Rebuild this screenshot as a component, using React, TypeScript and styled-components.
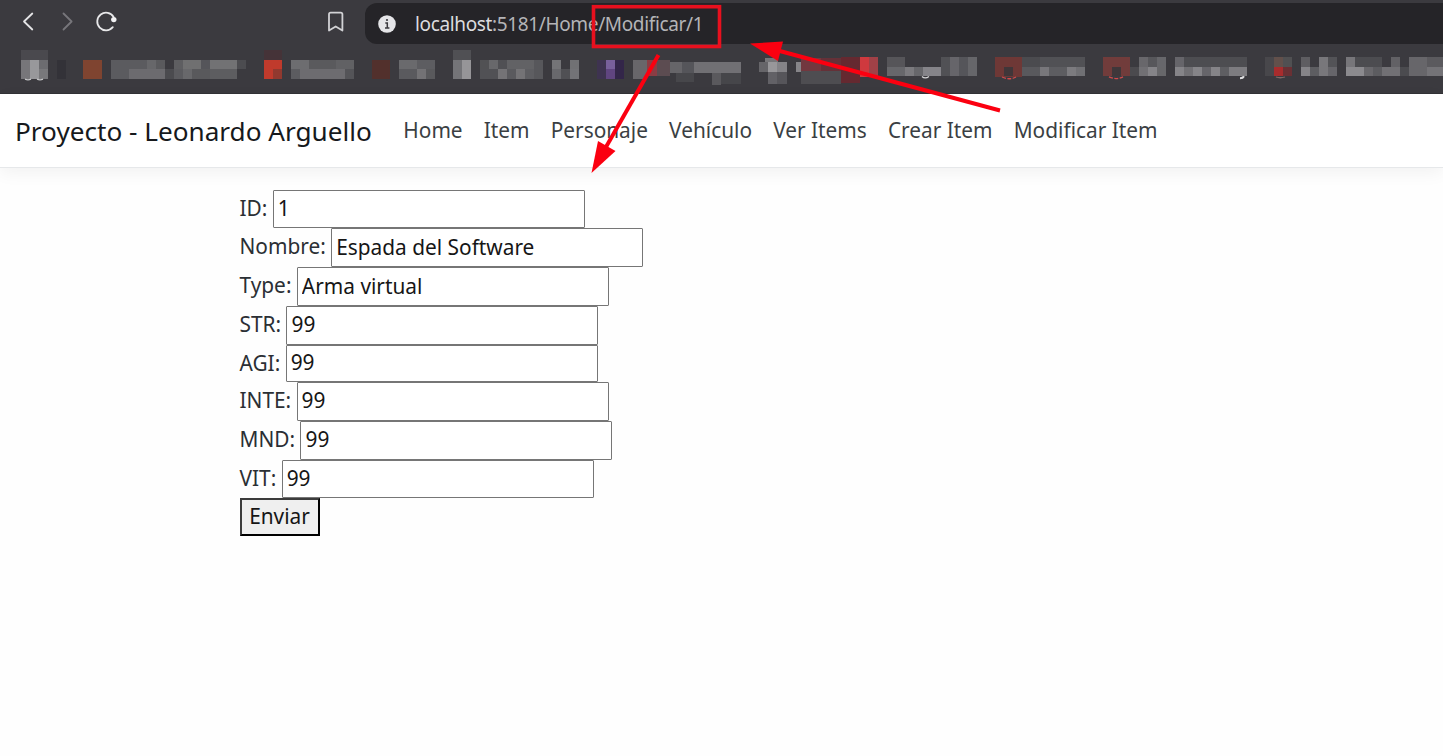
import React from "react";
import styled, { createGlobalStyle } from "styled-components";

const Global = createGlobalStyle`
  *, *::before, *::after { box-sizing: border-box; }
  body {
    margin: 0;
    background: #fefefe;
    font-family: "Noto Sans", sans-serif;
    font-size: 20.85px;
    color: #2b2f34;
    overflow: hidden;
  }
`;

const Page = styled.div`
  position: relative;
  width: 1443px;
  height: 756px;
  overflow: hidden;
  display: flex;
  flex-direction: column;
`;

const Chrome = styled.div`
  height: 94px;
  flex: none;
  background: #3b3a3f;
  display: flex;
  flex-direction: column;
  border-bottom: 1px solid #323236;
`;

const Toolbar = styled.div`
  height: 44px;
  padding: 3px 0 0 15px;
  display: flex;
  align-items: flex-start;
`;

const NavIcons = styled.svg`
  width: 350px;
  height: 41px;
  flex: none;
  display: block;
`;

const AddressBar = styled.div`
  flex: 1;
  height: 41px;
  padding-left: 12.5px;
  border-radius: 12px 0 0 12px;
  background: #252428;
  display: flex;
  align-items: center;
  gap: 19.5px;
`;

const InfoIcon = styled.svg`
  width: 18px;
  height: 18px;
  flex: none;
`;

const Url = styled.div`
  font-size: 19px;
  letter-spacing: -0.36px;
  line-height: 40px;
  color: #b4b4b7;
  white-space: nowrap;
`;

const Host = styled.span`
  color: #dcdcdf;
`;

const Bookmarks = styled.svg`
  display: block;
  width: 1443px;
  height: 49px;
`;

const Navbar = styled.nav`
  height: 74px;
  flex: none;
  padding-left: 15px;
  display: flex;
  align-items: center;
  background: #fff;
  border-bottom: 1px solid #e6e8ea;
  box-shadow: 0 5px 16px rgba(0, 0, 0, 0.05);
`;

const Brand = styled.a`
  font-size: 26.15px;
  line-height: 40px;
  color: #16191c;
  margin-right: 31.5px;
  white-space: nowrap;
`;

const Links = styled.div`
  display: flex;
  gap: 21.1px;
`;

const NavLink = styled.a`
  line-height: 32px;
  color: #3b3f43;
  white-space: nowrap;
  padding-bottom: 2px;
`;

const Form = styled.form`
  padding: 22px 0 0 239.5px;
  display: flex;
  flex-direction: column;
  align-items: flex-start;
`;

const Row = styled.label<{ $h: number }>`
  height: ${(p) => p.$h}px;
  display: flex;
  align-items: stretch;
  gap: 5.4px;
  line-height: 37px;
  white-space: nowrap;
`;

const Field = styled.input`
  width: 312px;
  margin: 0;
  padding: 0 4px 2px;
  border: 1px solid #767676;
  border-radius: 1px;
  background: #fff;
  color: #161616;
  font: inherit;
  line-height: 28px;
  outline: none;
`;

const Submit = styled.button`
  width: 80px;
  height: 38px;
  padding: 0 0 2px;
  border: 2px solid;
  border-color: #3c3c3c #000 #000 #3c3c3c;
  border-radius: 0;
  background: #efefef;
  color: #161616;
  font: inherit;
  line-height: 30px;
`;

const Annotations = styled.svg`
  position: absolute;
  left: 0;
  top: 0;
  width: 1443px;
  height: 200px;
  pointer-events: none;
`;

type Tile = [x: number, y: number, w: number, h: number, fill: string];

const tiles: Tile[] = [
  // first icon
  [21, 50, 27, 10, "#4a494e"], [21, 60, 9, 19, "#77767a"], [30, 60, 9, 19, "#98989b"], [39, 60, 9, 9, "#6c6c70"], [39, 69, 9, 10, "#78787b"],
  [57, 60, 9, 19, "#333238"],
  // first bookmark
  [83, 60, 19, 19, "#7f4430"],
  [111, 60, 36, 19, "#5b5b5f"], [147, 60, 9, 9, "#67676a"], [156, 60, 9, 9, "#5a5a5d"], [129, 69, 36, 10, "#6c6b6f"], [165, 69, 9, 10, "#4b4b4f"],
  [174, 60, 9, 9, "#5e5e61"], [183, 60, 18, 9, "#707071"], [174, 69, 9, 10, "#5b5b5f"], [183, 69, 9, 10, "#68686b"], [192, 69, 18, 10, "#59595c"],
  [201, 60, 9, 9, "#55555a"], [210, 60, 27, 9, "#727274"], [210, 69, 27, 10, "#5d5d60"], [237, 60, 9, 9, "#4c4c50"],
  // second bookmark
  [264, 50, 18, 10, "#453338"], [264, 60, 18, 9, "#c03a2c"], [264, 69, 9, 10, "#c03a2c"], [273, 69, 9, 10, "#91392f"],
  [291, 60, 18, 9, "#6d6d70"], [309, 60, 27, 9, "#5a5a5d"], [336, 60, 18, 9, "#616164"], [291, 69, 9, 10, "#5c5c60"], [300, 69, 45, 10, "#6d6c70"], [345, 69, 9, 10, "#545458"],
  // third bookmark
  [372, 60, 18, 19, "#52302c"], [399, 60, 18, 9, "#6a6a6d"], [417, 60, 18, 9, "#5d5d61"], [399, 69, 18, 10, "#5a5a5e"], [417, 69, 9, 10, "#737275"], [426, 69, 9, 10, "#59595c"],
  // fourth bookmark
  [453, 50, 18, 10, "#505054"], [453, 60, 9, 19, "#747478"], [462, 60, 9, 19, "#969598"],
  [480, 60, 9, 9, "#515154"], [489, 60, 9, 9, "#68686b"], [498, 60, 9, 9, "#505054"], [507, 60, 27, 9, "#626265"], [534, 60, 9, 19, "#57575b"],
  [480, 69, 18, 10, "#515155"], [498, 69, 9, 10, "#747376"], [507, 69, 9, 10, "#5a5a5e"], [516, 69, 9, 10, "#747376"], [525, 69, 9, 10, "#5e5e62"],
  [552, 60, 9, 9, "#747477"], [552, 69, 9, 10, "#68686c"], [561, 69, 18, 10, "#505054"], [570, 60, 9, 9, "#717174"], [570, 69, 9, 10, "#737377"],
  // fifth bookmark
  [597, 60, 9, 19, "#3e3350"], [606, 60, 9, 9, "#78609b"], [606, 69, 9, 10, "#604580"], [615, 60, 9, 19, "#332649"],
  [633, 60, 14, 19, "#68666a"], [647, 60, 10, 16, "#8b3d44"], [657, 60, 13, 16, "#5c4c51"],
  [670, 62, 12, 11, "#666569"], [682, 62, 12, 11, "#55555a"], [694, 62, 47, 11, "#717074"], [676, 73, 18, 9, "#47474b"], [712, 73, 9, 12, "#5a595d"], [721, 73, 20, 11, "#46464a"],
  // sixth bookmark
  [759, 62, 9, 10, "#666569"], [765, 58, 13, 4, "#777679"], [768, 62, 9, 10, "#98979a"], [777, 62, 10, 10, "#848387"], [768, 72, 9, 12, "#626166"], [777, 72, 10, 12, "#56555a"],
  [796, 62, 5, 10, "#868589"], [801, 58, 20, 13, "#72383f"], [821, 58, 20, 13, "#653138"], [801, 71, 40, 13, "#4e4d51"], [841, 57, 19, 26, "#652930"],
  [860, 57, 9, 20, "#cf393e"], [869, 57, 9, 20, "#a14147"],
  // seventh bookmark
  [887, 57, 18, 10, "#565559"], [887, 67, 18, 9, "#67676b"], [905, 67, 9, 9, "#7b7a7e"], [914, 67, 9, 9, "#67676b"], [923, 67, 18, 9, "#858489"],
  [941, 57, 9, 19, "#515155"], [950, 57, 9, 19, "#66656a"], [959, 57, 9, 19, "#55555a"], [968, 57, 9, 19, "#66666a"],
  // eighth bookmark
  [995, 57, 27, 20, "#6e3836"], [1004, 67, 9, 9, "#403639"],
  [1022, 57, 18, 10, "#4b4b4f"], [1040, 57, 45, 10, "#515155"], [1022, 67, 18, 9, "#59595d"], [1040, 67, 9, 9, "#78777b"], [1049, 67, 18, 9, "#5d5d61"], [1067, 67, 9, 9, "#7c7b7f"], [1076, 67, 9, 9, "#707074"],
  // ninth bookmark
  [1103, 57, 27, 19, "#713c3b"], [1112, 67, 9, 9, "#3f373a"], [1130, 67, 9, 9, "#4b4a4e"],
  [1139, 57, 9, 10, "#68676b"], [1148, 57, 9, 10, "#57575b"], [1157, 57, 9, 10, "#67676b"], [1139, 67, 9, 9, "#717074"], [1148, 67, 9, 9, "#858488"], [1157, 67, 9, 9, "#67676a"],
  [1175, 57, 9, 10, "#66656a"], [1184, 57, 63, 10, "#4d4d51"], [1175, 67, 9, 9, "#858488"], [1184, 67, 9, 9, "#717074"], [1193, 67, 9, 9, "#858488"], [1202, 67, 9, 9, "#66656a"], [1211, 67, 9, 9, "#858488"], [1220, 67, 9, 9, "#5e5e62"], [1229, 67, 18, 9, "#7d7c80"],
  // tenth bookmark
  [1265, 57, 9, 19, "#48474b"], [1274, 57, 9, 10, "#62504b"], [1274, 67, 9, 9, "#a82c2d"], [1283, 67, 9, 9, "#6a3034"], [1283, 57, 9, 10, "#505052"],
  [1301, 57, 9, 10, "#5e5d61"], [1301, 67, 9, 9, "#858488"], [1310, 67, 9, 9, "#5d5d61"], [1319, 57, 9, 19, "#78777b"], [1328, 57, 9, 10, "#535357"], [1328, 67, 9, 9, "#66656a"],
  [1346, 57, 9, 10, "#77767a"], [1355, 57, 27, 10, "#4c4c50"], [1346, 67, 18, 9, "#8b8a8e"], [1364, 67, 9, 9, "#69686c"], [1373, 67, 9, 9, "#5c5c60"], [1382, 67, 18, 9, "#717074"],
  [1391, 57, 9, 10, "#626165"], [1409, 57, 18, 19, "#67666a"], [1427, 57, 16, 10, "#5b5a5e"], [1400, 67, 9, 9, "#4b4b4f"], [1427, 67, 16, 9, "#747377"],
];

const links = ["Home", "Item", "Personaje", "Vehículo", "Ver Items", "Crear Item", "Modificar Item"];

const fields = [
  { label: "ID:", value: "1", height: 38 },
  { label: "Nombre:", value: "Espada del Software", height: 39 },
  { label: "Type:", value: "Arma virtual", height: 39 },
  { label: "STR:", value: "99", height: 38.5 },
  { label: "AGI:", value: "99", height: 37 },
  { label: "INTE:", value: "99", height: 39.5 },
  { label: "MND:", value: "99", height: 38.5 },
  { label: "VIT:", value: "99", height: 38.5 },
];

export default function App() {
  return (
    <Page>
      <Global />
      <Chrome>
        <Toolbar>
          <NavIcons viewBox="15 3 350 41" fill="none" strokeWidth="1.8" strokeLinecap="round" strokeLinejoin="round">
            <path d="M32.3 13.5 24 21.5l8.3 8" stroke="#e4e4e6" />
            <path d="M63.5 13.5 71.6 21.5l-8.1 8" stroke="#77767b" />
            <path d="M113.6 17A8.8 8.8 0 1 0 112.8 27.2" stroke="#e8e8ea" />
            <circle cx="113.8" cy="19.6" r="2.7" fill="#f2f2f4" />
            <path d="M329 14.3q0-1.6 1.6-1.6h10.2q1.6 0 1.6 1.6v16.3l-6.7-4.1-6.7 4.1z" stroke="#d2d2d5" />
          </NavIcons>
          <AddressBar>
            <InfoIcon viewBox="0 0 18 18">
              <circle cx="9" cy="9" r="8.8" fill="#e5e5e8" />
              <path d="M7.3 8h2v5M7 13h4.4" stroke="#39383d" strokeWidth="1.5" fill="none" />
              <circle cx="9" cy="5" r="1.1" fill="#39383d" />
            </InfoIcon>
            <Url><Host>localhost</Host>:5181/Home/Modificar/1</Url>
          </AddressBar>
        </Toolbar>
        <Bookmarks viewBox="0 44 1443 49" shapeRendering="crispEdges">
          {tiles.map(([x, y, w, h, fill], i) => (
            <rect key={i} x={x} y={y} width={w} height={h} fill={fill} />
          ))}
          <g fill="none" strokeWidth="1.3" shapeRendering="auto">
            <path d="M25 79.2q3 1.4 6 0M37 79.2q3 1.4 6 0" stroke="#c4c4c6" />
            <path d="M922 76.5q3 2.8 7 0" stroke="#d4d4d6" />
            <path d="M1002 77q7 3.5 14 0M1109 76.8q7 3.5 14 0" stroke="#d34a4b" strokeDasharray="4 1.5" />
            <path d="M1240 78.2q3 0 4-2" stroke="#e0e0e2" strokeWidth="2" />
            <path d="M1276 77q4 1.5 9 0" stroke="#806866" />
          </g>
        </Bookmarks>
      </Chrome>
      <Navbar>
        <Brand>Proyecto - Leonardo Arguello</Brand>
        <Links>
          {links.map((l) => <NavLink key={l}>{l}</NavLink>)}
        </Links>
      </Navbar>
      <Form>
        {fields.map((f) => (
          <Row key={f.label} $h={f.height}>
            {f.label}
            <Field defaultValue={f.value} />
          </Row>
        ))}
        <Submit type="button">Enviar</Submit>
      </Form>
      <Annotations viewBox="0 0 1443 200" fill="none">
        <rect x="593.5" y="6.7" width="126" height="39.8" stroke="#e8101e" strokeWidth="3.6" />
        <g stroke="#fb0010" strokeWidth="4">
          <path d="M658.5 55 606 147" />
          <path d="M1000 110.5 778 50.5" />
        </g>
        <g fill="#fb0010">
          <path d="M591.5 173 598 141 615.5 151z" />
          <path d="M750 43.5 783 41.5 778 61z" />
        </g>
      </Annotations>
    </Page>
  );
}
